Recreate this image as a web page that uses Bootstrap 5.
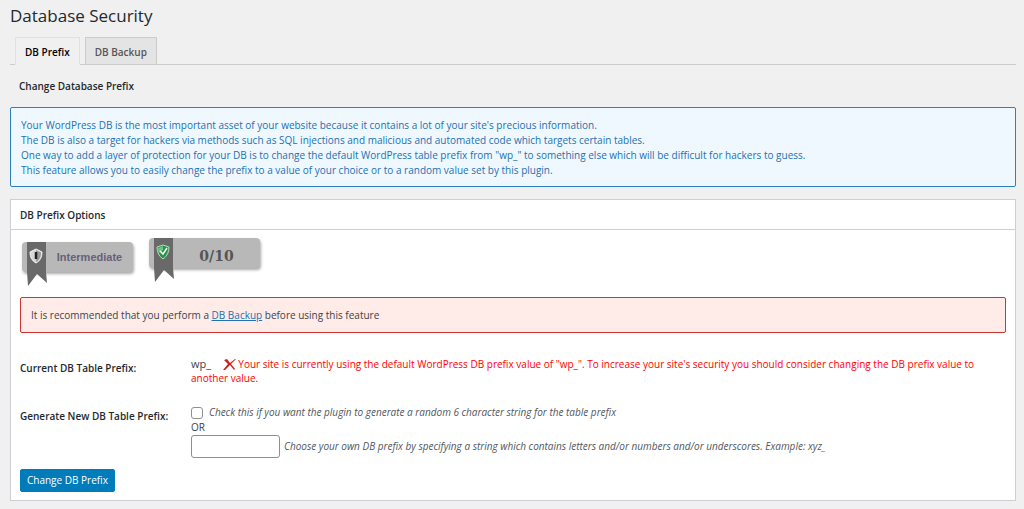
<!DOCTYPE html>
<html lang="en">
<head>
<meta charset="utf-8">
<meta name="viewport" content="width=device-width, initial-scale=1">
<title>Database Security</title>
<link href="https://cdn.jsdelivr.net/npm/bootstrap@5.3.0/dist/css/bootstrap.min.css" rel="stylesheet">
<style>
body{background:#f0f0f0;color:#3c434a;font-family:"Open Sans","Noto Sans",sans-serif;font-size:10px;line-height:15px}
.page{padding:4px 8px 7px 10px}
h1{font-size:17px;line-height:24px;font-weight:400;color:#23282d;margin:0 0 9px}
.nav-tabs{--bs-nav-tabs-border-color:#ccc;padding-left:5px;gap:5px}
.nav-tabs .nav-link{font-size:10px;line-height:16px;font-weight:600;padding:6px 9px 4px;border:1px solid #ccc;border-radius:0;background:#e4e4e4;color:#555}
.nav-tabs .nav-link.active{background:#f0f0f0;border-bottom-color:#f0f0f0;color:#000}
h2{font-size:10px;line-height:15px;font-weight:600;color:#23282d;margin:0}
.section-title{padding:14px 9px 13px}
.info{background:#f0f8ff;border:1px solid #2a7fc5;border-radius:2px;color:#2271b1;padding:10px 10px 8px;margin-bottom:12px}
.panel{background:#fff;border:1px solid #ccd0d4}
.panel-head{padding:8px 9px 6px;border-bottom:1px solid #ccd0d4}
.panel-main{padding:8px 9px}
.ribbons{gap:16px;padding-left:2px;height:50px}
.plaque{width:111px;height:30px;background:#b8b8b8;border-radius:4px;box-shadow:1px 2px 3px #aaa;position:relative;padding-left:24px;font-size:11px;line-height:30px;font-weight:700;text-align:center;color:#686078;font-family:"Liberation Sans",sans-serif}
.plaque svg{position:absolute;left:5px;top:0}
.plaque.level{margin-top:4px}
.plaque.score{font-family:"DejaVu Serif",serif;font-size:14px;line-height:36px;color:#555}
.warning{background:#ffebe8;border:1px solid #c33;border-radius:2px;padding:10px 10px 9px;margin:9px 0 24px;font-weight:500}
.warning a{color:#2271b1;font-weight:500}
.option{display:grid;grid-template-columns:171px 1fr;margin-bottom:20px}
.option + .option{margin-bottom:11px}
.option-name{font-weight:600;color:#23282d;padding-top:4px}
.current{line-height:14px;color:#f00}
.current b{font-size:11px;font-weight:500;color:#3c434a;margin-right:9px}
.hint{font-style:italic;color:#50575e}
.page .form-check-input{width:12px;height:12px;margin:0 6px 0 0;border-color:#8c8f94;border-radius:3px}
.page .form-control{width:89px;height:23px;padding:0 6px;font-size:10px;border-color:#8c8f94;border-radius:3px}
.page .btn{background:#007cba;border-color:#007cba;color:#fff;font-size:10px;line-height:15px;padding:3px 6px;border-radius:2px}
</style>
</head>
<body>
<main class="page">
<h1>Database Security</h1>
<nav class="nav nav-tabs" aria-label="Database security">
<a class="nav-link active" href="#prefix" aria-current="page">DB Prefix</a>
<a class="nav-link" href="#backup">DB Backup</a>
</nav>
<h2 class="section-title">Change Database Prefix</h2>
<div class="info">Your WordPress DB is the most important asset of your website because it contains a lot of your site's precious information.<br>The DB is also a target for hackers via methods such as SQL injections and malicious and automated code which targets certain tables.<br>One way to add a layer of protection for your DB is to change the default WordPress table prefix from "wp_" to something else which will be difficult for hackers to guess.<br>This feature allows you to easily change the prefix to a value of your choice or to a random value set by this plugin.</div>
<section class="panel" id="prefix">
<h2 class="panel-head">DB Prefix Options</h2>
<div class="panel-main">
<div class="ribbons d-flex align-items-start">
<div class="plaque level"><svg width="20" height="44" viewBox="0 0 20 44" aria-hidden="true"><path d="M0 0h19v30l1 11-10-9L1 44 0 30z" fill="#696969"/><path d="M9 7l6 3q0 8-6 11q-6-3-6-11z" fill="#d8d8d8" stroke="#f4f4f4"/><path d="M9 8l5 2.500q0 7-5 9.500z" fill="#999"/><path d="M9 10v7" stroke="#222" stroke-width="2.500"/></svg>Intermediate</div>
<div class="plaque score"><svg width="20" height="44" viewBox="0 0 20 44" aria-hidden="true"><path d="M0 0h19v30l1 11-10-9L1 44 0 30z" fill="#696969"/><path d="M9 7l6 2q0 8-6 12q-6-4-6-12z" fill="#259447" stroke="#b9d8c0"/><path d="M9 8L4 10q0 4 1 5l4-3z" fill="#6cc184"/><path d="M6 13l3 3 4-6" fill="none" stroke="#fff" stroke-width="1.500"/></svg>0/10</div>
</div>
<div class="warning">It is recommended that you perform a <a href="#backup">DB Backup</a> before using this feature</div>
<form>
<div class="option"><div class="option-name">Current DB Table Prefix:</div>
<div class="current"><b>wp_</b> <svg width="13" height="12" viewBox="0 0 13 12" aria-hidden="true"><path d="M1 1l3-1 3 4 5-4 1 0-5 5 4 5-1 1-4-5-5 5-2 0 5-6z" fill="#cc2018"/></svg> Your site is currently using the default WordPress DB prefix value of "wp_". To increase your site's security you should consider changing the DB prefix value to another value.</div></div>
<div class="option"><label class="option-name" for="own">Generate New DB Table Prefix:</label>
<div><div class="d-flex align-items-center"><input class="form-check-input" type="checkbox" id="random"><label class="hint" for="random">Check this if you want the plugin to generate a random 6 character string for the table prefix</label></div>
<div>OR</div>
<div class="d-flex align-items-center gap-1"><input class="form-control" type="text" id="own" aria-describedby="own-hint"><span class="hint" id="own-hint">Choose your own DB prefix by specifying a string which contains letters and/or numbers and/or underscores. Example: xyz_</span></div></div></div>
<button class="btn" type="button">Change DB Prefix</button>
</form>
</div>
</section>
</main>
<script src="https://cdn.jsdelivr.net/npm/bootstrap@5.3.0/dist/js/bootstrap.bundle.min.js"></script>
</body>
</html>
